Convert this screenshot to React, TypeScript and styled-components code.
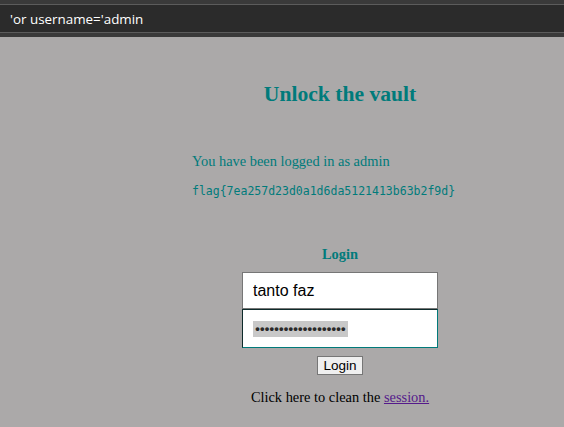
import React from "react";
import styled, { createGlobalStyle } from "styled-components";

const Global = createGlobalStyle`
  html, body { margin: 0; padding: 0; background: #aba9a9; }
  body { font-family: "Liberation Serif", "Times New Roman", serif; }
`;

const Page = styled.div`
  width: 564px;
  height: 427px;
  background: #aba9a9;
  overflow: hidden;
`;

const TopBar = styled.div`
  height: 37px;
  background: #3a3a3a;
  padding-top: 4px;
  box-sizing: border-box;
`;

const BarInner = styled.div`
  height: 29px;
  background: #2b2b2b;
  border-top: 1px solid #5c5c5c;
  border-bottom: 1px solid #5c5c5c;
  box-sizing: border-box;
  display: flex;
  align-items: center;
  padding-left: 10px;
  color: #ffffff;
  font-family: "Open Sans", "Noto Sans", sans-serif;
  font-size: 13.4px;
`;

const Content = styled.main`
  margin-left: 140px;
  width: 400px;
  text-align: center;
`;

const Title = styled.h1`
  margin: 44px 0 0;
  font-size: 21.6px;
  line-height: 26px;
  color: #007b7b;
  font-weight: bold;
`;

const Message = styled.div`
  text-align: left;
  padding-left: 52px;
  margin-top: 45px;
`;

const Logged = styled.p`
  margin: 0;
  font-size: 14.4px;
  line-height: 18px;
  color: #007b7b;
`;

const Flag = styled.p`
  margin: 14px 0 0;
  font-family: "DejaVu Sans Mono", "Liberation Mono", monospace;
  font-size: 11.5px;
  line-height: 14px;
  color: #007b7b;
`;

const Form = styled.form`
  margin-top: 47px;
  display: flex;
  flex-direction: column;
  align-items: center;
`;

const FormTitle = styled.div`
  font-size: 14.4px;
  font-weight: bold;
  line-height: 18px;
  color: #007b7b;
  margin-bottom: 9px;
`;

const Input = styled.input`
  width: 196px;
  height: 37px;
  box-sizing: border-box;
  background: #fff;
  border: 1px solid #767676;
  padding: 0 10px;
  font-family: "Liberation Sans", Arial, sans-serif;
  font-size: 16px;
  color: #000;
  outline: none;
  margin: 0;
`;

const PwBox = styled.div`
  width: 196px;
  height: 39px;
  box-sizing: border-box;
  background: #fff;
  border: 1px solid;
  border-color: #0e2b2b #007a7a #007a7a #0e2b2b;
  padding: 0 10px;
  display: flex;
  align-items: center;
`;

const Dots = styled.span`
  display: inline-block;
  background: #c8c8c8;
  color: #2a2a2a;
  font-family: "Liberation Sans", Arial, sans-serif;
  font-size: 13px;
  font-weight: bold;
  letter-spacing: 0.2px;
  height: 16px;
  line-height: 16px;
  width: 95px;
  overflow: hidden;
  white-space: nowrap;
`;

const Button = styled.button`
  margin-top: 8px;
  height: 19px;
  padding: 0 5px;
  background: #efefef;
  border: 1px solid #767676;
  border-radius: 0;
  font-family: "Liberation Sans", Arial, sans-serif;
  font-size: 13.5px;
  line-height: 17px;
  color: #000;
`;

const Footer = styled.p`
  margin: 13px 0 0;
  font-size: 14.4px;
  line-height: 18px;
  color: #000;
`;

const Link = styled.a`
  color: #551a8b;
  text-decoration: underline;
`;

export default function App() {
  return (
    <Page>
      <Global />
      <TopBar>
        <BarInner>'or username='admin</BarInner>
      </TopBar>
      <Content>
        <Title>Unlock the vault</Title>
        <Message>
          <Logged>You have been logged in as admin</Logged>
          <Flag>flag&#123;7ea257d23d0a1d6da5121413b63b2f9d&#125;</Flag>
        </Message>
        <Form onSubmit={(e) => e.preventDefault()}>
          <FormTitle>Login</FormTitle>
          <Input defaultValue="tanto faz" />
          <PwBox>
            <Dots>•••••••••••••••••••</Dots>
          </PwBox>
          <Button type="submit">Login</Button>
          <Footer>
            Click here to clean the <Link href="#">session.</Link>
          </Footer>
        </Form>
      </Content>
    </Page>
  );
}
